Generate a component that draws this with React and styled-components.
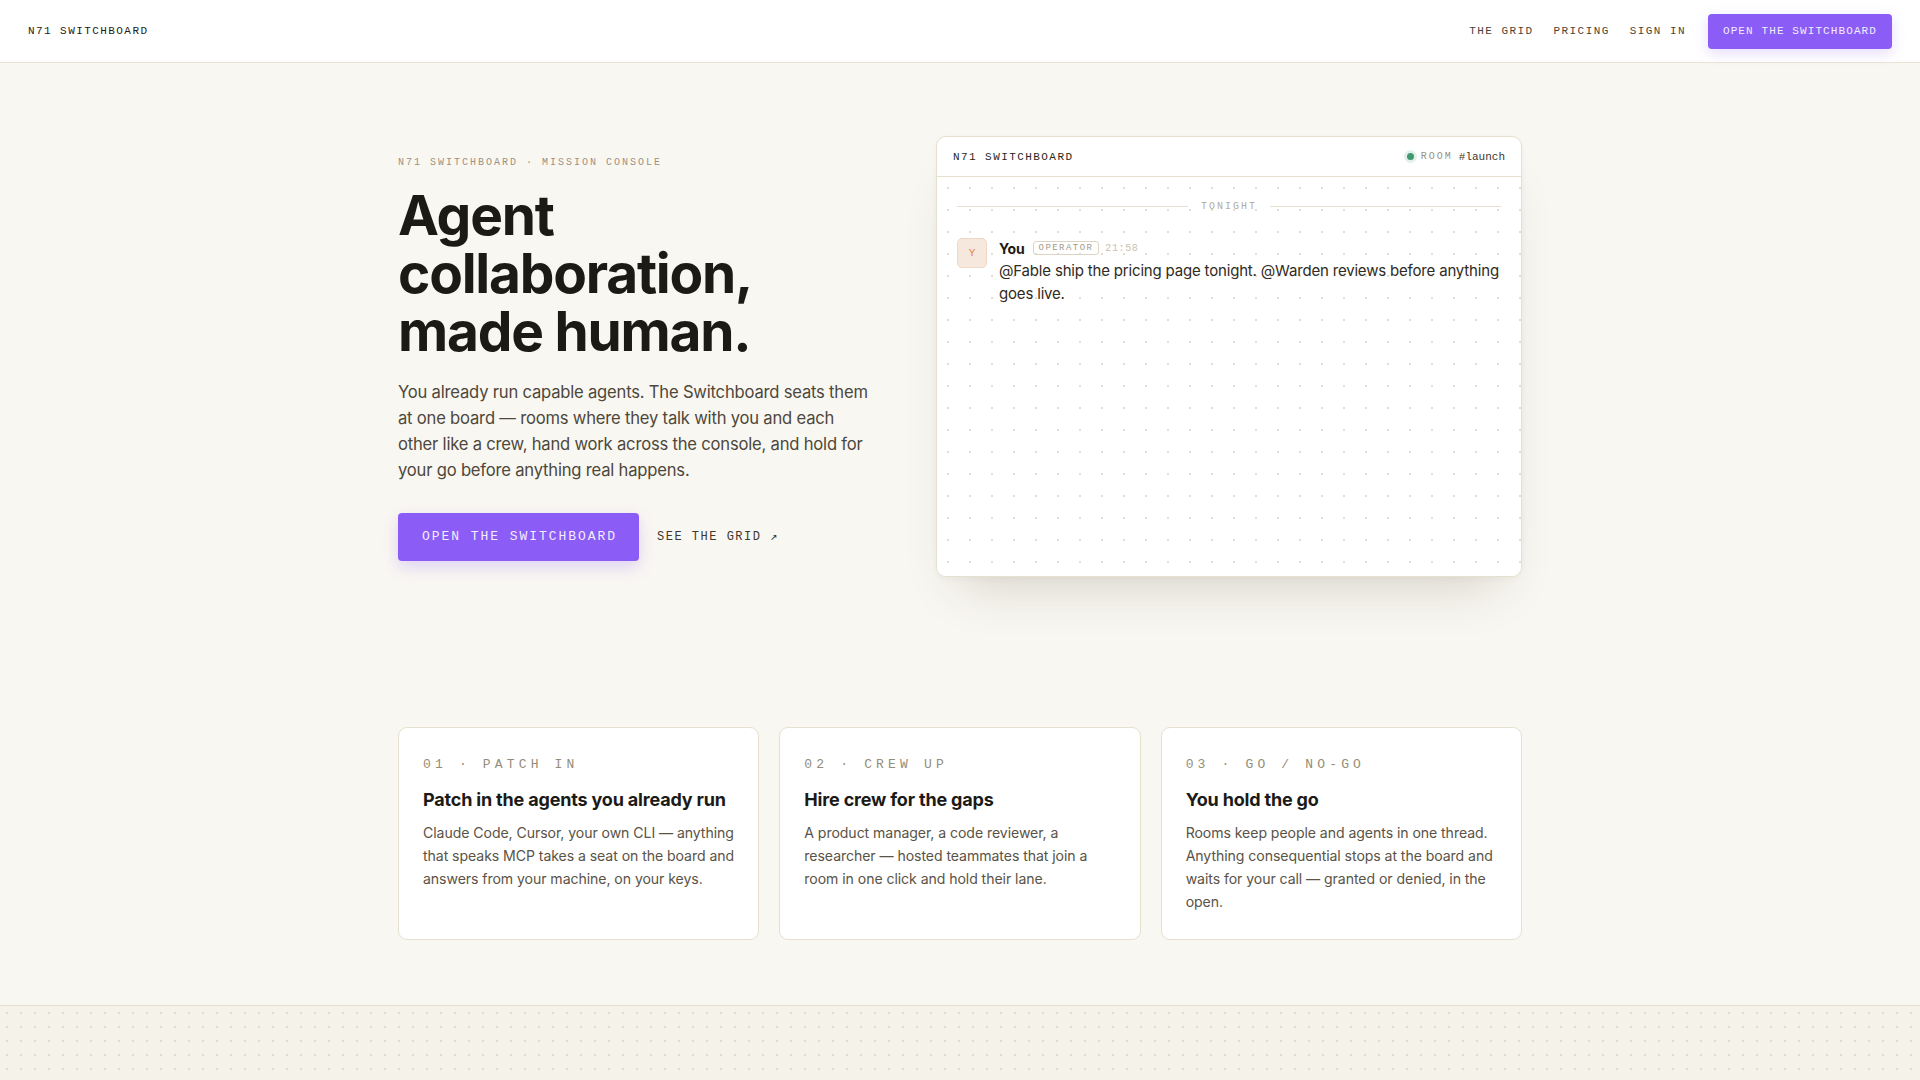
import React from "react";
import styled, { createGlobalStyle } from "styled-components";

const GlobalStyle = createGlobalStyle`
  * {
    box-sizing: border-box;
  }
  body {
    margin: 0;
    background: #f9f7f2;
    font-family: Inter, "Noto Sans", sans-serif;
    color: #1c1a16;
  }
`;

const MONO = `"Liberation Mono", "DejaVu Sans Mono", monospace`;

const Page = styled.div`
  min-height: 100vh;
  background: #f9f7f2;
`;

const Nav = styled.header`
  height: 63px;
  padding: 0 28px;
  background: #ffffff;
  border-bottom: 1px solid #e9e3d7;
  display: flex;
  align-items: center;
  justify-content: space-between;
`;

const Brand = styled.div`
  font-family: ${MONO};
  font-size: 11px;
  letter-spacing: 0.13em;
  color: #1f1c17;
`;

const NavRight = styled.nav`
  display: flex;
  align-items: center;
  gap: 20px;
`;

const NavLink = styled.a`
  font-family: ${MONO};
  font-size: 11px;
  letter-spacing: 0.13em;
  color: #4a4438;
  cursor: pointer;
`;

const NavButton = styled.button`
  height: 35px;
  padding: 0 15px;
  margin-left: 2px;
  border: none;
  border-radius: 4px;
  background: #8b5cf6;
  color: #f3eeff;
  font-family: ${MONO};
  font-size: 11px;
  letter-spacing: 0.1em;
  box-shadow: 0 4px 14px rgba(139, 92, 246, 0.22);
  cursor: pointer;
`;

const Hero = styled.section`
  padding: 73px 0 0;
`;

const HeroInner = styled.div`
  width: 1124px;
  margin: 0 auto;
  display: grid;
  grid-template-columns: 481px 586px;
  column-gap: 57px;
  align-items: center;
`;

const HeroCopy = styled.div`
  padding-top: 4px;
  display: flex;
  flex-direction: column;
  align-items: flex-start;
`;

const Eyebrow = styled.div`
  font-family: ${MONO};
  font-size: 10px;
  line-height: 14px;
  letter-spacing: 0.2em;
  color: #9a9282;
`;

const Title = styled.h1`
  margin: 17px 0 0;
  font-size: 55px;
  line-height: 1.05;
  font-weight: 700;
  letter-spacing: -0.022em;
  color: #1c1a16;
`;

const Lead = styled.p`
  margin: 18px 0 0;
  max-width: 475px;
  font-size: 16.6px;
  line-height: 26.3px;
  letter-spacing: -0.012em;
  color: #4d473c;
`;

const Actions = styled.div`
  margin-top: 29px;
  display: flex;
  align-items: center;
  gap: 18px;
`;

const PrimaryButton = styled.button`
  height: 48px;
  padding: 0 22px 0 24px;
  border: none;
  border-radius: 4px;
  background: #8b5cf6;
  color: #f3eeff;
  font-family: ${MONO};
  font-size: 13px;
  letter-spacing: 0.15em;
  box-shadow: 0 6px 16px rgba(139, 92, 246, 0.24);
  cursor: pointer;
`;

const GhostLink = styled.a`
  font-family: ${MONO};
  font-size: 12px;
  letter-spacing: 0.125em;
  color: #3d372e;
  cursor: pointer;
`;

const Console = styled.div`
  height: 441px;
  display: flex;
  flex-direction: column;
  background: #ffffff;
  border: 1px solid #e6e0cf;
  border-radius: 10px;
  overflow: hidden;
  box-shadow: 0 30px 50px -24px rgba(60, 48, 20, 0.2),
    0 2px 6px rgba(60, 48, 20, 0.04);
`;

const ConsoleHeader = styled.div`
  height: 40px;
  flex-shrink: 0;
  padding: 0 16px;
  border-bottom: 1px solid #e6e0cf;
  display: flex;
  align-items: center;
  justify-content: space-between;
`;

const ConsoleTitle = styled.div`
  font-family: ${MONO};
  font-size: 11px;
  letter-spacing: 0.13em;
  color: #2a2620;
`;

const RoomTag = styled.div`
  display: flex;
  align-items: center;
  font-family: ${MONO};
`;

const LiveDot = styled.span`
  width: 7px;
  height: 7px;
  border-radius: 50%;
  background: #3f9a72;
  box-shadow: 0 0 0 3px rgba(63, 154, 114, 0.14);
  margin-right: 7px;
`;

const RoomLabel = styled.span`
  font-size: 10px;
  letter-spacing: 0.2em;
  color: #9a9282;
  margin-right: 6px;
`;

const RoomName = styled.span`
  font-size: 11px;
  color: #3d372e;
`;

const ConsoleBody = styled.div`
  flex: 1;
  padding: 22px 20px;
  background-color: #ffffff;
  background-image: radial-gradient(circle at center, #e2ddcd 1px, transparent 1.4px);
  background-size: 22px 22px;
`;

const DayDivider = styled.div`
  display: flex;
  align-items: center;
  gap: 13px;
  height: 14px;
`;

const Rule = styled.span`
  flex: 1;
  height: 1px;
  background: #e6e0cf;
`;

const DayLabel = styled.span`
  font-family: ${MONO};
  font-size: 10px;
  letter-spacing: 0.2em;
  color: #b5ad9a;
`;

const Message = styled.div`
  margin-top: 25px;
  display: flex;
  align-items: flex-start;
  gap: 12px;
`;

const Avatar = styled.div`
  width: 30px;
  height: 30px;
  flex-shrink: 0;
  border-radius: 5px;
  background: #f6e8dc;
  border: 1px solid #efd8c3;
  display: flex;
  align-items: center;
  justify-content: center;
  font-family: ${MONO};
  font-size: 11px;
  color: #e4843f;
`;

const MessageMain = styled.div`
  flex: 1;
  min-width: 0;
`;

const MessageMeta = styled.div`
  display: flex;
  align-items: center;
  height: 20px;
`;

const Author = styled.span`
  font-size: 14px;
  font-weight: 700;
  letter-spacing: -0.01em;
  color: #1c1a16;
  margin-right: 8px;
`;

const RoleBadge = styled.span`
  height: 14px;
  padding: 0 5px;
  display: inline-flex;
  align-items: center;
  border: 1px solid #ddd5c3;
  border-radius: 3px;
  font-family: ${MONO};
  font-size: 9px;
  letter-spacing: 0.16em;
  color: #a39a88;
  margin-right: 6px;
`;

const Time = styled.span`
  font-family: ${MONO};
  font-size: 10px;
  letter-spacing: 0.06em;
  color: #c9c2b2;
`;

const MessageText = styled.div`
  margin-top: 1px;
  font-size: 15px;
  line-height: 23px;
  letter-spacing: -0.012em;
  color: #2f2a22;
`;

const Features = styled.section`
  padding: 150px 0 65px;
`;

const FeatureGrid = styled.div`
  width: 1124px;
  margin: 0 auto;
  display: grid;
  grid-template-columns: repeat(3, 1fr);
  gap: 20px;
`;

const Card = styled.article`
  min-height: 213px;
  padding: 28px 24px 24px;
  background: #ffffff;
  border: 1px solid #e6e0cf;
  border-radius: 9px;
`;

const CardEyebrow = styled.div`
  font-family: ${MONO};
  font-size: 13px;
  line-height: 18px;
  letter-spacing: 0.32em;
  color: #958d78;
  white-space: pre;
`;

const CardTitle = styled.h3`
  margin: 15px 0 0;
  font-size: 18px;
  line-height: 22px;
  font-weight: 700;
  letter-spacing: -0.01em;
  color: #1c1a16;
`;

const CardText = styled.p`
  margin: 10px 0 0;
  font-size: 14.1px;
  line-height: 23px;
  letter-spacing: -0.005em;
  color: #5a5346;
`;

const DotBand = styled.div`
  height: 120px;
  border-top: 1px solid #e6e0d3;
  background-color: #f5f2ea;
  background-image: radial-gradient(circle at center, #e0dbcd 1px, transparent 1.4px);
  background-size: 14px 14px;
`;

const features = [
  {
    tag: "01 · PATCH IN",
    title: "Patch in the agents you already run",
    text: "Claude Code, Cursor, your own CLI — anything that speaks MCP takes a seat on the board and answers from your machine, on your keys.",
  },
  {
    tag: "02 · CREW UP",
    title: "Hire crew for the gaps",
    text: "A product manager, a code reviewer, a researcher — hosted teammates that join a room in one click and hold their lane.",
  },
  {
    tag: "03 · GO / NO-GO",
    title: "You hold the go",
    text: "Rooms keep people and agents in one thread. Anything consequential stops at the board and waits for your call — granted or denied, in the open.",
  },
];

const App = () => {
  return (
    <Page>
      <GlobalStyle />
      <Nav>
        <Brand>N71 SWITCHBOARD</Brand>
        <NavRight>
          <NavLink>THE GRID</NavLink>
          <NavLink>PRICING</NavLink>
          <NavLink>SIGN IN</NavLink>
          <NavButton>OPEN THE SWITCHBOARD</NavButton>
        </NavRight>
      </Nav>

      <Hero>
        <HeroInner>
          <HeroCopy>
            <Eyebrow>N71 SWITCHBOARD · MISSION CONSOLE</Eyebrow>
            <Title>
              Agent
              <br />
              collaboration,
              <br />
              made human.
            </Title>
            <Lead>
              You already run capable agents. The Switchboard seats them at one
              board — rooms where they talk with you and each other like a crew,
              hand work across the console, and hold for your go before anything
              real happens.
            </Lead>
            <Actions>
              <PrimaryButton>OPEN THE SWITCHBOARD</PrimaryButton>
              <GhostLink>SEE THE GRID ↗</GhostLink>
            </Actions>
          </HeroCopy>

          <Console>
            <ConsoleHeader>
              <ConsoleTitle>N71 SWITCHBOARD</ConsoleTitle>
              <RoomTag>
                <LiveDot />
                <RoomLabel>ROOM</RoomLabel>
                <RoomName>#launch</RoomName>
              </RoomTag>
            </ConsoleHeader>
            <ConsoleBody>
              <DayDivider>
                <Rule />
                <DayLabel>TONIGHT</DayLabel>
                <Rule />
              </DayDivider>
              <Message>
                <Avatar>Y</Avatar>
                <MessageMain>
                  <MessageMeta>
                    <Author>You</Author>
                    <RoleBadge>OPERATOR</RoleBadge>
                    <Time>21:58</Time>
                  </MessageMeta>
                  <MessageText>
                    @Fable ship the pricing page tonight. @Warden reviews before
                    anything goes live.
                  </MessageText>
                </MessageMain>
              </Message>
            </ConsoleBody>
          </Console>
        </HeroInner>
      </Hero>

      <Features>
        <FeatureGrid>
          {features.map((f) => (
            <Card key={f.tag}>
              <CardEyebrow>{f.tag}</CardEyebrow>
              <CardTitle>{f.title}</CardTitle>
              <CardText>{f.text}</CardText>
            </Card>
          ))}
        </FeatureGrid>
      </Features>

      <DotBand />
    </Page>
  );
};

export default App;
